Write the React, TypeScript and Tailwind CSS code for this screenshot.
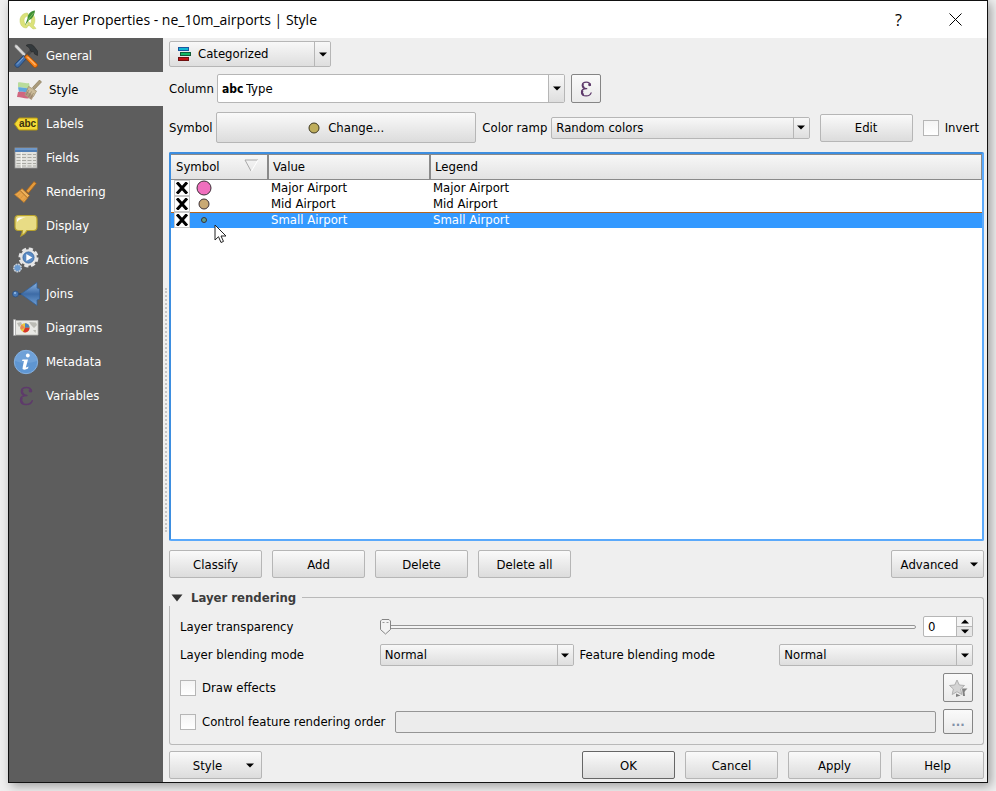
import React, { useState } from 'react';
import { clsx } from 'clsx';

const FONT = "font-['DejaVu_Sans_Condensed','DejaVu_Sans',sans-serif]";

const EpsilonIcon = ({ size = 24 }: { size?: number }) => (
  <svg width={size} height={size} viewBox="0 0 24 24" fill="none">
    <path
      d="M18 7C17.5 4 15 2.8 12.5 2.8C9 2.8 7 4.6 7 7.2C7 9.6 9 11.2 13 11.3M13 11.5C8.500 11.5 6 13.500 6 16.300C6 19.200 8.500 21.200 12.300 21.200C15.500 21.200 18 20 18.800 17.200"
      stroke="#5e3a6b"
      strokeWidth="1.600"
      strokeLinecap="round"
    />
    <path d="M8.200 4.800C7.200 6.500 7.500 9.200 9.800 10.500M7.500 13.800C6.300 16 6.800 18.500 8.800 20" stroke="#5e3a6b" strokeWidth="2.400" />
    <circle cx="16.800" cy="6.300" r="1.900" fill="#5e3a6b" />
  </svg>
);

const GeneralIcon = () => (
  <svg width="24" height="24" viewBox="0 0 24 24">
    <path d="M1 0.800L3 1L12.500 11L10.500 13L0.800 3Z" fill="#d8d8d8" stroke="#8a8a8a" strokeWidth="0.500" />
    <path d="M9.500 12.500L17 4.500L19.500 7L12 14.500Z" fill="#4a4a4a" />
    <path d="M12 1.500C15 -0.500 18.500 0 20.500 3L24 7.500L23.500 11.500L20.500 10L20 8L17 7.500L15.500 4.500C14.500 3 13.500 2.500 12 1.500Z" fill="#33393c" stroke="#222" strokeWidth="0.500" />
    <path d="M9.500 11.500L12.500 14.500L5 22.800C3 24.500 0 22 1.200 19.800Z" fill="#3f6da8" stroke="#1f3f6b" strokeWidth="0.800" />
    <path d="M9.500 13.500L3 20.500" stroke="#86abd8" strokeWidth="1" />
    <path d="M13 10.500L23.300 20C24.300 22 22 24.300 20 23.300L10.500 13Z" fill="#f57f17" stroke="#a34b00" strokeWidth="0.800" />
    <path d="M13.500 13L21.500 21" stroke="#ffb46b" strokeWidth="1.200" />
  </svg>
);

const StyleIcon = () => (
  <svg width="26" height="24" viewBox="0 0 26 24">
    <path d="M2 4.500C6 3.500 9 6 13 5L14 10C9 11 6 8.500 2 9.500Z" fill="#b9dc9b" />
    <path d="M2 9.500C6 8.500 9 11 14 10L15 14C10 15.500 7 13 3 14Z" fill="#5fa8dc" />
    <path d="M2 14C6 13 10 15 15 14L14 20C10 21.500 6 19 1 19Z" fill="#d0667f" />
    <path d="M23.500 2L25.500 4L18.500 11.500L16.500 9.500Z" fill="#aa9b7c" stroke="#81724f" strokeWidth="0.600" />
    <path d="M12.500 8.500L20.500 13L17.500 18.500L10.500 13.500Z" fill="#cbbb99" stroke="#9a8a66" strokeWidth="0.700" />
    <path d="M10.500 13.500L17.500 18.500L15.500 22L8.500 17Z" fill="#b09a81" />
    <path d="M13 12L10 17M15.500 13.500L12.500 19M17.500 15L14.500 20.500" stroke="#85745b" strokeWidth="0.600" />
  </svg>
);

const LabelsIcon = () => (
  <svg width="24" height="24" viewBox="0 0 24 24">
    <path d="M0.500 12L4.500 6.500Q5 6 6 6H22.500Q23.500 6 23.500 7V17Q23.500 18 22.500 18H6Q5 18 4.500 17.500Z" fill="#f4d936" stroke="#b39710" />
    <text x="13.500" y="15" textAnchor="middle" fontSize="10" fontWeight="bold" fontFamily="Liberation Sans, sans-serif" fill="#3a3210">abc</text>
  </svg>
);

const FieldsIcon = () => (
  <svg width="24" height="24" viewBox="0 0 24 24">
    <rect x="1" y="2" width="22" height="20" fill="#e2e2de" stroke="#999" strokeWidth="0.800" />
    <rect x="1" y="2" width="22" height="4" fill="#4e7db5" />
    <path d="M1 3H23" stroke="#8fb4dd" />
    <path d="M2.500 8.500H22M2.500 11.500H22M2.500 14.500H22M2.500 17.500H22M2.500 20H22" stroke="#a9a9a3" strokeDasharray="4 1.500" />
    <path d="M7.500 6V22" stroke="#f6f6f3" strokeWidth="0.800" />
  </svg>
);

const RenderingIcon = () => (
  <svg width="24" height="24" viewBox="0 0 24 24">
    <path d="M20 1.500L22.300 3.500L14.500 13L12 11Z" fill="#e39a3b" stroke="#a5621a" strokeWidth="0.800" />
    <path d="M8 8.500L15.500 15.500L13.500 18L6 10.500Z" fill="#f0b35c" stroke="#a5621a" strokeWidth="0.800" />
    <path d="M6 10.500L13.500 18L10 22.500L0.500 14.500Z" fill="#e9a54a" stroke="#b5762a" strokeWidth="0.800" />
    <path d="M7 12.500L3.500 16M9.500 15L6.500 18.500M12 17.500L9 21" stroke="#d08c38" strokeWidth="0.600" />
  </svg>
);

const DisplayIcon = () => (
  <svg width="24" height="24" viewBox="0 0 24 24">
    <path d="M4.500 1.500H19.500Q23 1.500 23 5V13Q23 16.500 19.500 16.500H13Q11 20.500 7 22Q8.500 19 8.500 16.500H4.500Q1 16.500 1 13V5Q1 1.500 4.500 1.500Z" fill="#e8dc85" stroke="#b8a22c" strokeWidth="1.200" />
    <path d="M3 8V6Q3 3.500 6 3.500H12Q6 4 3 8Z" fill="#fff" />
  </svg>
);

const ActionsIcon = () => (
  <svg width="26" height="26" viewBox="0 0 26 26">
    <circle cx="15.500" cy="10.500" r="8.700" fill="none" stroke="#e5e5e5" strokeWidth="2.600" strokeDasharray="4.200 2.630" />
    <circle cx="15.500" cy="10.500" r="7" fill="#5b8bc4" stroke="#e5e5e5" strokeWidth="2.600" />
    <circle cx="15.500" cy="10.500" r="5.600" fill="none" stroke="#36649b" strokeWidth="0.700" />
    <path d="M13.300 7L19.300 10.500L13.300 14Z" fill="#fff" />
    <circle cx="4.500" cy="21" r="3.700" fill="#6b9bd0" stroke="#c5ccd4" strokeWidth="1.600" strokeDasharray="1.800 0.700" />
  </svg>
);

const JoinsIcon = () => (
  <svg width="28" height="24" viewBox="0 0 28 24">
    <defs>
      <linearGradient id="join" x1="0" y1="0" x2="0" y2="1">
        <stop offset="0" stopColor="#8db5e2" />
        <stop offset="0.5" stopColor="#3d6ba6" />
        <stop offset="1" stopColor="#6f9fd4" />
      </linearGradient>
    </defs>
    <path d="M3 12H10" stroke="#1e3f6b" strokeWidth="1.200" />
    <circle cx="3.500" cy="12" r="3" fill="#4a79b5" stroke="#274c7c" strokeWidth="0.700" />
    <circle cx="3" cy="11" r="1" fill="#9cc3ec" />
    <path d="M9 12L25 0.500V6L27.500 7V17L25 18V23.500Z" fill="url(#join)" stroke="#34629b" strokeWidth="0.800" />
  </svg>
);

const DiagramsIcon = () => (
  <svg width="26" height="24" viewBox="0 0 26 24">
    <path d="M2.500 4.500H25V19H2.500Z" fill="#e9e9e5" stroke="#b4b4b0" strokeWidth="0.800" />
    <path d="M0.500 3.500H2.500V19.500H0.500Z" fill="#fafafa" stroke="#a0a0a0" strokeWidth="0.600" />
    <path d="M4 7L8 6L9 8L6 11ZM16 6L23 6.500L24 9L21 12L18 9ZM20 14L23 14L22.500 17Z" fill="#bcbcb5" />
    <circle cx="12" cy="11.800" r="4.600" fill="#e9c73a" />
    <path d="M12 11.800V7.200A4.600 4.600 0 0 1 16.600 11.800Z" fill="#4a82c0" />
    <path d="M12 11.800H16.600A4.600 4.600 0 0 1 10 16Z" fill="#d7352b" />
    <path d="M12 11.800L7.800 13.800A4.600 4.600 0 0 1 8.800 8.500Z" fill="#e88a55" />
  </svg>
);

const MetadataIcon = () => (
  <svg width="26" height="26" viewBox="0 0 26 26">
    <circle cx="13" cy="13" r="11.700" fill="#5f96d2" stroke="#86b0de" strokeWidth="1" />
    <path d="M2 12A11 11 0 0 1 24 12Q13 16 2 12Z" fill="#86b2e0" opacity="0.400" />
    <circle cx="14.800" cy="6.500" r="1.900" fill="#fff" />
    <path d="M9.500 10.500H15L12.800 18.500Q14 18.500 15.500 17.500L15 19.500Q12.500 21 10.500 20.500Q9 20 9.800 17.500L11 12H9Z" fill="#fff" />
  </svg>
);

const QgisIcon = () => (
  <svg width="18" height="20" viewBox="0 0 18 20">
    <path d="M8.500 3C4 3 1 6.500 1 10.500C1 15 3.500 18 7.500 18L10 15C6.500 15 5 13 5 10.500C5 8 6.500 6 9.500 6Z" fill="#dbe27a" stroke="#c0ca5c" strokeWidth="0.500" />
    <path d="M10 6C13 7 13 11 11.500 13.500L9 11.500L8.500 14L14 19L17 18.500L14.500 15.500C16.500 12 16.500 7 13.500 4Z" fill="#dbe27a" stroke="#c0ca5c" strokeWidth="0.500" />
    <path d="M16 0.500C12 1 8.500 4 8.500 8.500L6 15.500L10 10C13.500 9 15.500 5 16 0.500Z" fill="#3f8f35" />
    <path d="M14.500 3L9 10" stroke="#8fc766" strokeWidth="0.800" />
  </svg>
);

const CategorizedIcon = () => (
  <svg width="14" height="15" viewBox="0 0 14 15">
    <rect x="1.500" y="0.500" width="10" height="3" fill="#0fb6d2" stroke="#1b55a0" />
    <rect x="3.500" y="5.500" width="10" height="3" fill="#13b866" stroke="#125c38" />
    <rect x="1.500" y="10.500" width="10" height="3" fill="#c01313" stroke="#701010" />
  </svg>
);

const StarIcon = () => (
  <svg width="20" height="20" viewBox="0 0 20 20">
    <path d="M9 2L11.300 7L16.500 7.500L12.600 11L13.800 16.500L9 13.700L4.200 16.500L5.400 11L1.500 7.500L6.700 7Z" fill="#d4d4d4" stroke="#b0b0b0" />
    <path d="M14 10.500H19.500L17.500 12.500L16.500 14L17 18H15L14.500 14ZM8 15.500L12.500 17.500L8 19Z" fill="#808080" />
  </svg>
);

const Triangle = ({ up = false }: { up?: boolean }) => (
  <svg width="8" height="5" viewBox="0 0 8 5" className={clsx(up && 'rotate-180')}>
    <path d="M0 0.500H8L4 4.500Z" fill="#000" />
  </svg>
);

const CursorIcon = () => (
  <svg width="13" height="20" viewBox="0 0 13 20">
    <path d="M1 1V16L4.500 12.700L7 18.500L9.500 17.400L7 12H12Z" fill="#fff" stroke="#222" />
  </svg>
);

const BUTTON =
  'flex items-center justify-center rounded-[2px] border bg-linear-to-b from-[#fafafa] to-[#dcdcdc] hover:to-[#e6e6e6]';
const TOOL_BUTTON =
  'flex w-[30px] shrink-0 items-center justify-center rounded-[2px] border border-[#858585] bg-linear-to-b from-[#fafafa] to-[#eaeaea]';
const SELECT_FACE = 'h-[22px] bg-linear-to-b from-[#f8f8f8] to-[#dedede] pl-1';
const CHECKBOX =
  'size-4 shrink-0 appearance-none border border-[#b6b6b6] bg-linear-to-b from-[#f4f4f4] to-white checked:bg-[#555]';

type ButtonProps = React.ButtonHTMLAttributes<HTMLButtonElement> & { primary?: boolean };

const DialogButton = ({ className, primary, children, ...rest }: ButtonProps) => (
  <button
    type="button"
    className={clsx(BUTTON, 'h-7 w-[93px] pt-px', primary ? 'border-[#666]' : 'border-[#b6b6b6]', className)}
    {...rest}
  >
    {children}
  </button>
);

type SelectProps = React.SelectHTMLAttributes<HTMLSelectElement> & {
  options: string[];
  wrapper?: string;
  icon?: React.ReactNode;
};

const Select = ({ options, wrapper, icon, className, ...rest }: SelectProps) => (
  <div className={clsx('relative min-w-0', wrapper)}>
    {icon && <span className="pointer-events-none absolute inset-y-0 left-0 flex items-center">{icon}</span>}
    <select
      className={clsx(
        'block w-full appearance-none rounded-[2px] border border-[#b6b6b6] pr-5 outline-none',
        className,
      )}
      {...rest}
    >
      {options.map((o) => (
        <option key={o}>{o}</option>
      ))}
    </select>
    <span className="pointer-events-none absolute inset-y-px right-px flex w-4 items-center justify-center rounded-r-[1px] border-l border-[#b6b6b6] bg-linear-to-b from-[#f8f8f8] to-[#dedede]">
      <Triangle />
    </span>
  </div>
);

const NAV = [
  { label: 'General', icon: <GeneralIcon /> },
  { label: 'Style', icon: <StyleIcon /> },
  { label: 'Labels', icon: <LabelsIcon /> },
  { label: 'Fields', icon: <FieldsIcon /> },
  { label: 'Rendering', icon: <RenderingIcon /> },
  { label: 'Display', icon: <DisplayIcon /> },
  { label: 'Actions', icon: <ActionsIcon /> },
  { label: 'Joins', icon: <JoinsIcon /> },
  { label: 'Diagrams', icon: <DiagramsIcon /> },
  { label: 'Metadata', icon: <MetadataIcon /> },
  { label: 'Variables', icon: <EpsilonIcon size={22} /> },
];

const CATEGORIES = [
  { value: 'Major Airport', color: '#f06fbe', r: 7 },
  { value: 'Mid Airport', color: '#c9a974', r: 5 },
  { value: 'Small Airport', color: '#5fa08a', r: 2.5 },
];

const TitleBar = () => (
  <header className="flex h-[37px] shrink-0 items-center bg-white pl-[10px]">
    <QgisIcon />
    <h1 className="ml-1.5 flex-1 font-['Open_Sans',sans-serif] text-sm text-black">
      Layer Properties - ne_10m_airports | Style
    </h1>
    <button type="button" aria-label="Help" className="flex w-[57px] justify-center font-['Open_Sans',sans-serif] text-base">
      ?
    </button>
    <button type="button" aria-label="Close" className="flex w-[60px] justify-center pr-1">
      <svg width="13" height="13" viewBox="0 0 13 13">
        <path d="M0.500 0.500L12.500 12.500M12.500 0.500L0.500 12.500" stroke="#000" />
      </svg>
    </button>
  </header>
);

const Sidebar = ({ active, onSelect }: { active: string; onSelect: (s: string) => void }) => (
  <nav className="w-[154px] shrink-0 bg-[#5d5d5d]">
    {NAV.map(({ label, icon }) => (
      <button
        key={label}
        type="button"
        onClick={() => onSelect(label)}
        className={clsx(
          'flex h-[34px] w-full items-center gap-2 pt-px text-left',
          label === active ? 'bg-[#efefef] pl-2 text-black' : 'pl-[5px] text-white',
        )}
      >
        <span className="flex w-6 shrink-0 justify-center [&>svg]:shrink-0">{icon}</span>
        {label}
      </button>
    ))}
  </nav>
);

const CategoryTable = () => {
  const [selected, setSelected] = useState(2);

  return (
    <div className="flex-1 rounded-[2px] border-2 border-t-[#3d8ee0] border-r-[#5aa9fb] border-b-[#5aa9fb] border-l-[#3d8ee0] bg-white">
      <table className="w-full table-fixed border-separate border-spacing-0 text-left">
        <thead>
          <tr className="h-[26px] bg-linear-to-b from-[#f8f8f8] to-[#e2e2e2] *:border-y *:border-[#8a8a8a] *:py-0 *:font-normal">
            <th className="w-[98px] border-r-2 pl-[5px]">
              <span className="flex items-center justify-between pr-2">
                Symbol
                <svg width="15" height="13" viewBox="0 0 15 13" className="mb-1">
                  <path d="M14 1H1L7 12" fill="none" stroke="#a8a8a8" />
                  <path d="M14 1L7.500 12" stroke="#fff" />
                </svg>
              </span>
            </th>
            <th className="w-[162px] border-r-2 pl-1">Value</th>
            <th className="border-r pl-1">Legend</th>
          </tr>
        </thead>
        <tbody>
          {CATEGORIES.map((c, i) => (
            <tr
              key={c.value}
              onClick={() => setSelected(i)}
              className={clsx(
                'h-4 leading-4',
                i === selected && 'bg-[#3399ff] text-white *:shadow-[inset_0_1px_0_#b5661f]',
              )}
            >
              <td className="p-0 pl-[3px]">
                <div className="relative flex h-4 items-center gap-1.5">
                  <label className="grid size-4 place-items-center border border-[#c8c8c8] bg-white *:col-start-1 *:row-start-1">
                    <input type="checkbox" defaultChecked aria-label={c.value} className="peer size-3.5 appearance-none" />
                    <svg width="12" height="12" viewBox="0 0 12 12" className="pointer-events-none hidden peer-checked:block">
                      <path d="M2 1.500L10 10.500M10 1.500L2 10.500" stroke="#000" strokeWidth="3" strokeLinecap="square" />
                    </svg>
                  </label>
                  <svg width="16" height="16" viewBox="0 0 16 16">
                    <circle cx="8" cy="8" r={c.r} fill={c.color} stroke="#3b3036" />
                  </svg>
                  {i === 2 && (
                    <span className="pointer-events-none absolute top-3 left-10 z-10">
                      <CursorIcon />
                    </span>
                  )}
                </div>
              </td>
              <td className="p-0 pl-0.5">{c.value}</td>
              <td className="p-0 pl-0.5">{c.value}</td>
            </tr>
          ))}
        </tbody>
      </table>
    </div>
  );
};

const LayerRendering = () => {
  const [transparency, setTransparency] = useState(0);

  return (
    <section className="mt-3">
      <div className="flex h-4">
        <h2 className="flex items-center gap-2 pr-1.5 pl-0.5 font-bold text-[#3c3c3c]">
          <svg width="12" height="8" viewBox="0 0 12 8">
            <path d="M0.500 0.500H11.500L6 7.500Z" fill="#333" />
          </svg>
          Layer rendering
        </h2>
        <div className="mt-[7px] flex-1 rounded-tr-[3px] border-t border-r border-[#b9b9b9]" />
      </div>
      <div className="flex flex-col gap-[7px] rounded-b-[3px] border border-t-0 border-[#b9b9b9] p-2.5">
        <div className="grid grid-cols-4 items-center gap-x-1.5">
          <label htmlFor="transparency">Layer transparency</label>
          <div className="col-span-3 flex items-center gap-[7px]">
            <div className="relative flex h-[21px] flex-1 items-center">
              <div className="h-1 w-full rounded-[2px] border border-[#959595] bg-[#f4f4f4]" />
              <input
                id="transparency"
                type="range"
                value={transparency}
                onChange={(e) => setTransparency(Number(e.target.value))}
                className="absolute inset-0 w-full cursor-pointer opacity-0"
              />
              <svg
                width="11"
                height="16"
                viewBox="0 0 11 16"
                className="pointer-events-none absolute"
                style={{ left: `${transparency * 0.98}%` }}
              >
                <path d="M2 0.500H9L10.500 2V10.500L5.500 15L0.500 10.500V2Z" fill="#f3f3f3" stroke="#858585" />
                <path d="M2.500 3.500H4.500M6.500 3.500H8.500" stroke="#999" />
              </svg>
            </div>
            <div className="flex h-[21px] w-[50px] overflow-hidden rounded-[2px] border border-[#b6b6b6] bg-white">
              <input
                aria-label="Transparency value"
                value={transparency}
                onChange={(e) => setTransparency(Math.min(100, Number(e.target.value) || 0))}
                className="w-8 pl-1 outline-none"
              />
              <div className="flex w-4 flex-col border-l border-[#b6b6b6]">
                <button
                  type="button"
                  aria-label="Increase"
                  onClick={() => setTransparency(Math.min(100, transparency + 1))}
                  className="flex flex-1 items-center justify-center border-b border-[#b6b6b6] bg-[#f4f4f4]"
                >
                  <Triangle up />
                </button>
                <button
                  type="button"
                  aria-label="Decrease"
                  onClick={() => setTransparency(Math.max(0, transparency - 1))}
                  className="flex flex-1 items-center justify-center bg-[#e6e6e6]"
                >
                  <Triangle />
                </button>
              </div>
            </div>
          </div>
        </div>

        <div className="grid grid-cols-4 items-center gap-x-1.5">
          <label htmlFor="layer-blend">Layer blending mode</label>
          <Select id="layer-blend" options={['Normal', 'Multiply', 'Screen']} className={SELECT_FACE} />
          <label htmlFor="feature-blend">Feature blending mode</label>
          <Select id="feature-blend" options={['Normal', 'Multiply', 'Screen']} className={SELECT_FACE} />
        </div>

        <div className="flex items-center justify-between">
          <label className="flex items-center gap-1.5">
            <input type="checkbox" className={CHECKBOX} />
            Draw effects
          </label>
          <button type="button" aria-label="Customize effects" className={clsx(TOOL_BUTTON, 'h-[29px]')}>
            <StarIcon />
          </button>
        </div>

        <div className="flex items-center">
          <label className="flex items-center gap-1.5">
            <input type="checkbox" className={CHECKBOX} />
            Control feature rendering order
          </label>
          <input
            disabled
            aria-label="Rendering order"
            className="ml-2.5 h-[22px] min-w-0 flex-1 rounded-[2px] border border-[#959595] bg-[#ececec]"
          />
          <button
            type="button"
            aria-label="Define order"
            className={clsx(TOOL_BUTTON, 'ml-[7px] h-[25px] font-bold text-[#8291a8]')}
          >
            ...
          </button>
        </div>
      </div>
    </section>
  );
};

export default function App() {
  const [page, setPage] = useState('Style');

  return (
    <div className={clsx('flex min-h-screen bg-[#f0f0f0] px-2 pb-2 text-[13px] leading-4 text-black', FONT)}>
      <div className="flex flex-1 flex-col border border-[#111] bg-[#efefef] shadow-[3px_3px_10px_rgba(0,0,0,0.35)]">
        <TitleBar />
        <div className="flex flex-1">
          <Sidebar active={page} onSelect={setPage} />
          <div className="flex w-1.5 shrink-0 items-center justify-center">
            <div className="h-[244px] w-0 border-l-2 border-dotted border-[#c4c4c4]" />
          </div>
          <main className="flex min-w-0 flex-1 flex-col pt-[3px] pr-[3px] pb-[3px]">
            <Select
              aria-label="Renderer"
              options={['Categorized', 'Single Symbol', 'Graduated']}
              wrapper="w-[162px]"
              className="h-[26px] bg-linear-to-b from-[#f8f8f8] to-[#dedede] pl-7"
              icon={<span className="ml-2"><CategorizedIcon /></span>}
            />

            <div className="mt-[7px] flex items-center">
              <label htmlFor="column" className="w-12">Column</label>
              <Select
                id="column"
                options={['Type', 'Name']}
                wrapper="w-[348px]"
                className="h-[29px] bg-white pl-7"
                icon={<span className="ml-[5px] text-xs font-bold">abc</span>}
              />
              <button type="button" aria-label="Expression" className={clsx(TOOL_BUTTON, 'ml-1.5 h-[29px]')}>
                <EpsilonIcon size={18} />
              </button>
            </div>

            <div className="mt-[9px] flex items-center">
              <label htmlFor="symbol" className="w-[47px]">Symbol</label>
              <button id="symbol" type="button" className={clsx(BUTTON, 'h-[31px] flex-1 gap-2 border-[#b6b6b6]')}>
                <svg width="12" height="12" viewBox="0 0 12 12">
                  <circle cx="6" cy="6" r="5" fill="#bfae5c" stroke="#3d3820" />
                </svg>
                Change...
              </button>
              <label htmlFor="ramp" className="w-[75px] pl-1.5 whitespace-nowrap">Color ramp</label>
              <Select id="ramp" options={['Random colors', 'Blues', 'Greens']} wrapper="flex-1" className={SELECT_FACE} />
              <DialogButton className="ml-2.5">Edit</DialogButton>
              <label className="ml-2.5 flex items-center gap-1.5 pr-[5px]">
                <input type="checkbox" className={CHECKBOX} />
                Invert
              </label>
            </div>

            <div className="mt-[9px] flex flex-1 flex-col">
              <CategoryTable />
            </div>

            <div className="mt-[9px] flex gap-2.5">
              <DialogButton>Classify</DialogButton>
              <DialogButton>Add</DialogButton>
              <DialogButton>Delete</DialogButton>
              <DialogButton>Delete all</DialogButton>
              <DialogButton className="ml-auto gap-3 pl-1">
                Advanced <Triangle />
              </DialogButton>
            </div>

            <LayerRendering />

            <div className="mt-1.5 flex gap-2.5">
              <DialogButton className="mr-auto gap-6 pl-4">
                Style <Triangle />
              </DialogButton>
              <DialogButton primary>OK</DialogButton>
              <DialogButton>Cancel</DialogButton>
              <DialogButton>Apply</DialogButton>
              <DialogButton>Help</DialogButton>
            </div>
          </main>
        </div>
      </div>
    </div>
  );
}
